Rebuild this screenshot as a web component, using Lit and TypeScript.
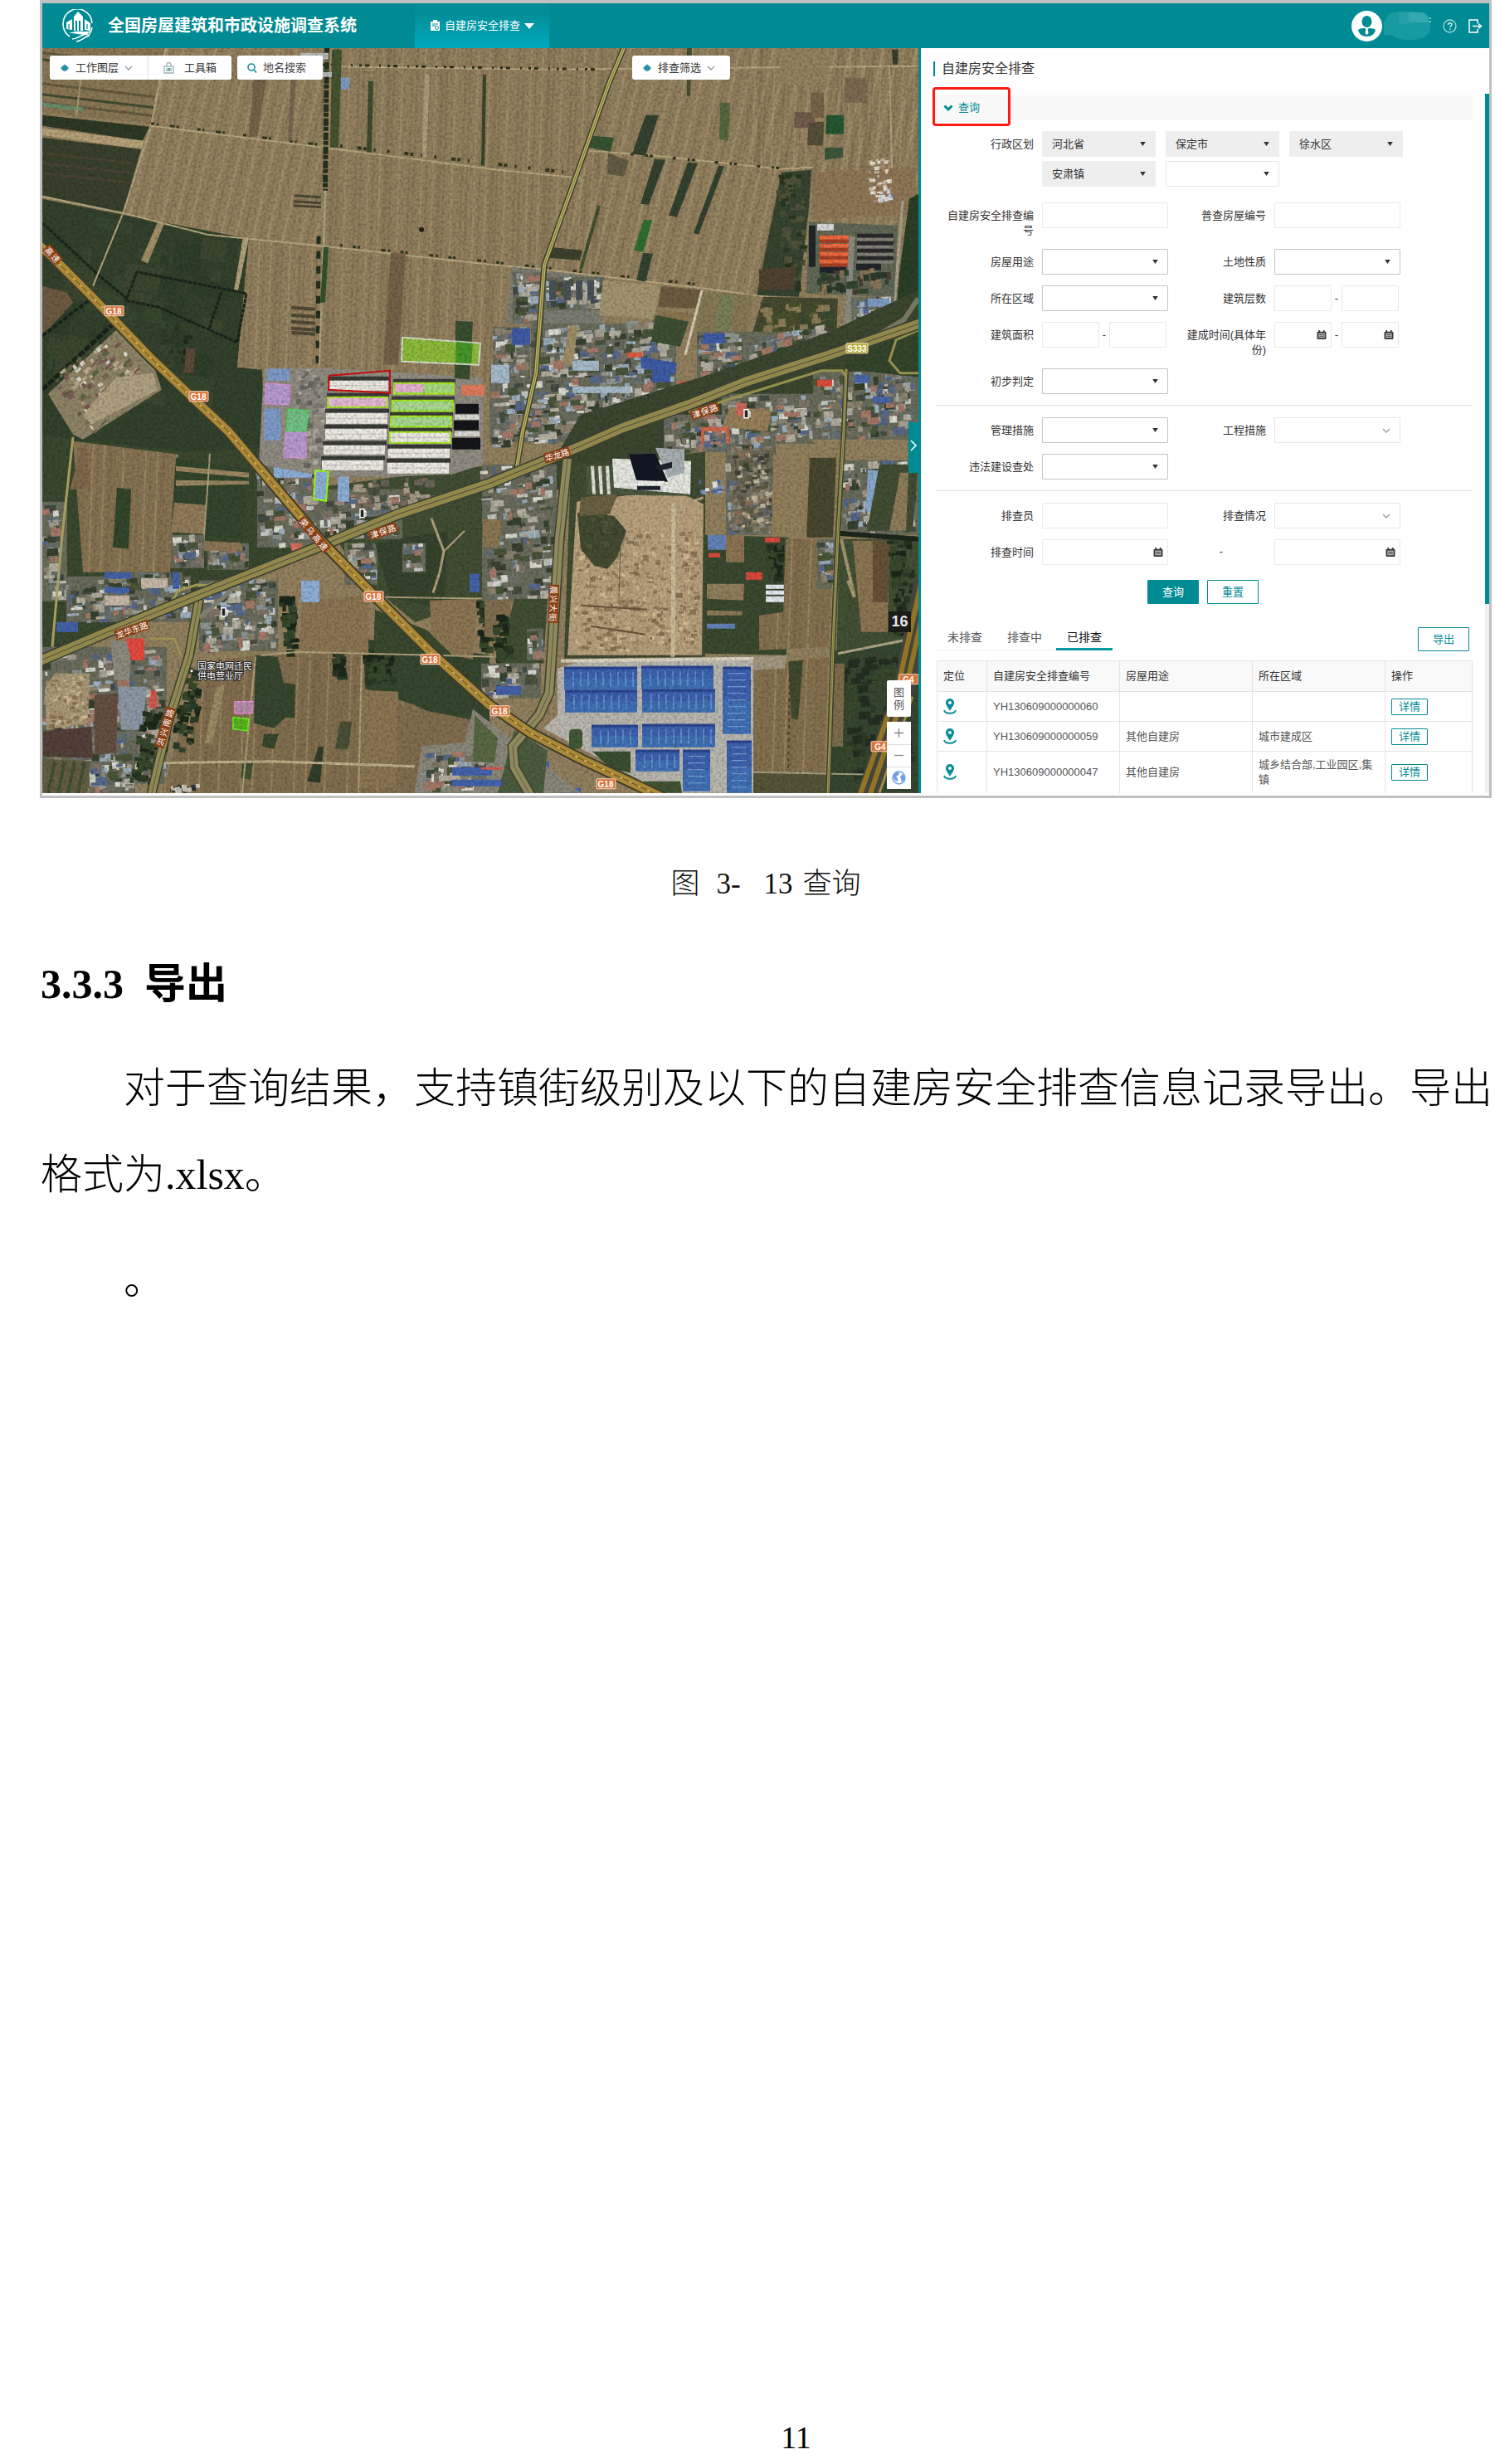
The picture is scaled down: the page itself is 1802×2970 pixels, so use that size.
import { LitElement, html, svg, css, nothing } from "lit";
import { customElement, property } from "lit/decorators.js";

/* ---------- helpers for the aerial map ---------- */

function rng(seed: number) {
  let s = seed >>> 0;
  return () => {
    s = (s * 1664525 + 1013904223) >>> 0;
    return s / 4294967296;
  };
}

const ROOFS = ["#c6c8c2", "#8f9694", "#70756f", "#454c42", "#dcdbd2", "#66716f", "#9fb0bf", "#a8a294", "#39422f", "#7d7466", "#57698c", "#8c8571", "#4a5539", "#b5b0a2", "#a67a68"];
const TREES = ["#25331f", "#2c3b27", "#1c281a", "#37492c"];
const DIRT = ["#c6b08a", "#a9926e", "#97815f", "#d0ba95", "#8b7555"];

/** Scatters small blocks over a slightly rotated zone, one path per colour. */
function scatter(x: number, y: number, w: number, h: number, n: number, seed: number, colors: string[], minS: number, maxS: number, rot = -4) {
  const r = rng(seed);
  const paths: string[] = colors.map(() => "");
  for (let i = 0; i < n; i++) {
    const c = Math.floor(r() * colors.length);
    const bw = minS + r() * (maxS - minS);
    const bh = minS + r() * (maxS - minS) * 0.6;
    const bx = x + r() * (w - bw);
    const by = y + r() * (h - bh);
    paths[c] += `M${bx.toFixed(0)} ${by.toFixed(0)}h${bw.toFixed(0)}v${bh.toFixed(0)}h-${bw.toFixed(0)}z`;
  }
  return svg`<g transform="rotate(${rot} ${x + w / 2} ${y + h / 2})">${paths.map((d, i) => svg`<path d=${d} fill=${colors[i]}></path>`)}</g>`;
}

const town = (x: number, y: number, w: number, h: number, n: number, seed: number, rot = -4) =>
  svg`<rect x=${x} y=${y} width=${w} height=${h} fill="#6a6c5c"></rect>${scatter(x, y, w, h, n, seed, ROOFS, 3, 15, rot)}`;

const poly = (p: string, fill: string, o = 1) => svg`<polygon points=${p} fill=${fill} opacity=${o}></polygon>`;
const line = (p: string, stroke: string, w: number, dash = "none") =>
  svg`<polyline points=${p} fill="none" stroke=${stroke} stroke-width=${w} stroke-dasharray=${dash}></polyline>`;

const road = (p: string, edge: string, fill: string, w: number) =>
  svg`${line(p, "#3a4030", w + 3)}${line(p, fill, w)}${line(p, edge, 1)}`;

const shield = (x: number, y: number, t: string, c = "#d9713a") =>
  svg`<rect x=${x - 11} y=${y - 6} width=${t.length > 3 ? 26 : 23} height="12" rx="1" fill=${c} stroke="#f3dcc4" stroke-width="1"></rect>
  <text x=${x + (t.length > 3 ? 2 : 0)} y=${y + 4} text-anchor="middle" class="shield">${t}</text>`;

const roadName = (x: number, y: number, a: number, t: string, gap = 11) =>
  svg`<g transform="translate(${x} ${y}) rotate(${a})">
    <rect x="-1" y="-6" width=${t.length * gap + 2} height="12" fill="#8a3f14"></rect>
    ${[...t].map((c, i) => svg`<text x=${i * gap + gap / 2} y="4" text-anchor="middle" class="road">${c}</text>`)}
  </g>`;

const fuel = (x: number, y: number) =>
  svg`<path d="M${x} ${y}h5v10h-5z M${x + 5} ${y + 2}l2 1v6" fill="#222" stroke="#fff" stroke-width="1.4"></path>`;

/** Large blue roof with light ribs. */
function hall(x: number, y: number, w: number, h: number, vertical = false) {
  let d = "";
  if (vertical) for (let v = y + 8; v < y + h - 3; v += 8) d += `M${x + 6} ${v}h${w - 12}`;
  else for (let v = x + 11; v < x + w - 4; v += 9) d += `M${v} ${y + 6}v${h - 10}`;
  return svg`<rect x=${x} y=${y} width=${w} height=${h} fill="#4070b6"></rect>
    <rect x=${x} y=${y} width=${w} height=${h / 2} fill="#3c5cac" opacity=".7"></rect>
    <rect x=${x} y=${y} width=${w} height="3" fill="#2b4590"></rect>
    <path d=${d} stroke="#84abdf" stroke-width="1" fill="none"></path>`;
}

const shed = (x: number, y: number, w: number, h: number, fill = "#efece6", stroke = "none") =>
  svg`<rect x=${x - 1} y=${y - 5} width=${w + 3} height="5" fill="#3a3c38"></rect>
    <rect x=${x} y=${y} width=${w} height=${h} fill=${fill} stroke=${stroke} stroke-width="2"></rect>
    <path d="M${x + 2} ${y + h / 2}h${w - 4}" stroke="#c6c2ba" stroke-width="1"></path>`;

@customElement("aerial-map")
export class AerialMap extends LitElement {
  static styles = css`
    :host { display: block; overflow: hidden; }
    svg { display: block; width: 100%; height: 100%; }
    text { font-family: "Liberation Sans", "Noto Sans CJK SC", sans-serif; }
    .shield { font-size: 10px; font-weight: 700; fill: #fff; }
    .road { font-size: 10px; fill: #fff; }
    .place { font-size: 11px; fill: #fff; stroke: #222; stroke-width: 2px; paint-order: stroke; }
  `;

  render() {
    const highway = "45,294 60,307 110,357 137,385 180,430 240,487 275,520 320,573 385,650 450,717 520,787 590,850 640,884 700,915 800,962";
    const jinbao = "45,798 130,762 240,717 390,657 480,620 590,583 700,538 750,516 830,488 900,460 1000,428 1115,388";
    return html`<svg viewBox="51 58 1056 898" preserveAspectRatio="xMidYMid slice" role="img" aria-label="卫星地图">
      <defs>
        <pattern id="rows" width="64" height="400" patternUnits="userSpaceOnUse" patternTransform="rotate(2)">
          <path d="M3 0V400M17 0V400M40 0V400" stroke="#ad9a74" stroke-width="2" opacity=".5"></path>
          <path d="M9 0V400M30 0V400M52 0V400M58 0V400" stroke="#75644a" stroke-width="2" opacity=".35"></path>
          <path d="M24 0V400" stroke="#66543c" stroke-width="5" opacity=".2"></path>
        </pattern>
        <pattern id="tilt" width="56" height="400" patternUnits="userSpaceOnUse" patternTransform="rotate(13)">
          <path d="M5 0V400M26 0V400M43 0V400" stroke="#b09d77" stroke-width="3" opacity=".45"></path>
          <path d="M14 0V400M34 0V400M50 0V400" stroke="#75644a" stroke-width="2" opacity=".35"></path>
        </pattern>
        <filter id="grain" x="0" y="0" width="100%" height="100%">
          <feTurbulence type="fractalNoise" baseFrequency=".3" numOctaves="3" seed="4"></feTurbulence>
          <feColorMatrix values="0 0 0 0 0  0 0 0 0 0  0 0 0 0 0  1.6 0 0 0 -.6"></feColorMatrix>
        </filter>
      </defs>

      <rect x="40" y="50" width="1080" height="920" fill="#93815f"></rect>
      <rect x="388" y="50" width="340" height="410" fill="url(#rows)"></rect>
      <polygon points="190,58 392,58 386,445 285,445 300,288 150,258" fill="url(#tilt)"></polygon>
      <polygon points="755,58 1107,58 1107,260 940,330 910,356 660,325" fill="url(#tilt)"></polygon>
      <rect x="900" y="50" width="210" height="160" fill="url(#rows)"></rect>

      ${/* north-west strips */ nothing}
      ${poly("51,58 200,58 182,150 51,135", "#8a7856")}
      ${[64, 72, 101, 114, 124].map((y, i) => line(`51,${y} 186,${y + 16}`, i % 2 ? "#444c34" : "#655a3e", 3))}
      ${line("51,126 100,132", "#6a8c6c", 5)} ${line("98,90 92,140", "#a9986f", 2)}
      ${poly("51,139 180,153 172,170 51,152", "#2e3a25")}
      ${poly("51,155 174,170 170,180 51,163", "#b6a27a")}
      ${poly("51,166 170,180 148,258 51,236", "#39412d")}
      ${[185, 197, 209].map((y) => line(`51,${y} 160,${y + 12}`, "#4b4430", 3))}

      ${/* dark green fields west of the tree line */ nothing}
      ${poly("51,240 148,259 300,288 286,443 316,446 320,560 51,620", "#33422c")}
      ${scatter(60, 265, 220, 260, 50, 11, ["#37482f", "#2f3f2a", "#3c4730"], 10, 46, 12)}
      ${poly("190,268 198,270 178,318 170,314", "#a28f69")}
      ${poly("293,286 300,287 287,350 282,350", "#b3a07a")}
      ${poly("300,288 388,299 383,440 286,443", "#93815f")} <polygon points="302,289 388,299 383,440 287,443" fill="url(#rows)"></polygon>
      ${poly("51,345 80,352 88,365 51,405", "#6e5b43")}
      ${line("51,269 120,333 153,360 165,328 297,354 286,413 250,397 190,370 150,362", "#1a251a", 3, "5 1")}
      ${line("267,352 252,396", "#1a251a", 3, "5 1")} ${line("51,405 110,360", "#1a251a", 4, "6 2")}
      ${line("51,470 135,392", "#18221a", 5, "8 2")}
      ${poly("58,475 140,398 185,440 195,470 100,530 88,524", "#8f8467")}
      ${scatter(75, 418, 95, 85, 110, 21, ["#b8aa8c", "#7c6a58", "#dad6c8", "#7c5a55", "#5d6548"], 2, 9, -40)}
      ${poly("140,455 185,450 190,470 110,512 100,500", "#b1a283")}
      ${scatter(195, 390, 40, 55, 30, 22, TREES, 3, 9)}
      ${poly("224,420 236,420 233,450 222,450", "#5d4a37")}

      ${/* roads and tree rows between the northern fields */ nothing}
      ${line("200,58 182,152 148,258 112,345", "#b7a780", 2)}
      ${line("182,152 390,178", "#b9a981", 2)} ${line("390,178 600,205 700,215", "#b9a981", 2)}
      ${line("182,149 388,175", "#35361f", 3, "4 3 2 14 6 2 3 22")}
      ${line("410,176 700,210", "#35361f", 4, "3 18 5 2 4 9 2 14")}
      ${line("51,237 148,257 250,283 390,297 600,320 655,325 850,348 940,360", "#b9a981", 2)}
      ${line("410,296 850,344", "#35361f", 3, "3 12 4 2 3 26 5 3")}
      ${line("365,80 660,84 1107,80", "#b9a981", 2)} ${line("365,78 720,84", "#30321f", 3, "3 4 5 12 2 8")}
      ${line("710,182 790,188 940,204 980,202", "#b9a981", 2)} ${line("760,186 940,203", "#30321f", 3, "4 14 3 2 4 24")}
      ${line("394,58 392,230", "#25301e", 6, "9 1 5 2")} ${line("384,285 383,440", "#25301e", 5, "9 9")}
      ${line("392,230 385,440", "#b0aa8c", 2)}
      ${poly("400,60 412,60 408,178 398,178", "#465432")} ${poly("444,98 450,98 448,184 442,184", "#3f4b2f")}
      ${poly("390,298 396,298 392,365 386,365", "#355230")} ${poly("582,90 586,90 584,200 580,200", "#37472b")}
      ${poly("512,90 518,90 514,190 509,190", "#b39a7d")} ${poly("306,90 322,90 310,165 300,165", "#776349")}
      ${poly("351,90 357,90 352,170 347,170", "#776853")} ${poly("471,305 489,306 480,440 462,440", "#776249")}
      ${[236, 243, 248].map((y) => line(`354,${y} 387,${y + 2}`, "#4a4a36", 3))}
      ${[371, 380, 388, 396, 401].map((y) => line(`351,${y} 380,${y + 2}`, "#524b38", 4))}
      <circle cx="508" cy="277" r="3" fill="#26201a"></circle>
      <path d="M362 64h34v8h-34zM362 87h38v6h-38z" fill="#b9bbb8"></path><path d="M411 94h10v14h-10z" fill="#7c9cc8"></path>

      ${/* north-east parcels */ nothing}
      ${poly("778,139 794,139 778,188 762,186", "#354230")}
      ${poly("789,192 802,193 782,247 772,246", "#354230")} ${poly("829,196 841,197 816,262 806,260", "#354230")}
      ${poly("866,200 873,201 842,283 836,281", "#354230")} ${poly("776,265 786,266 775,304 764,302", "#2f6f30")}
      ${poly("775,305 787,306 778,340 767,338", "#344430")} ${poly("663,298 702,302 699,314 660,311", "#3f422e")}
      ${poly("720,248 724,249 702,325 698,325", "#40522f")} ${poly("713,164 740,166 736,183 710,178", "#375433")}
      ${poly("733,185 758,194 752,213 732,210", "#635d46")} ${poly("868,124 880,124 878,170 867,168", "#55683f")}
      ${poly("996,139 1017,139 1017,162 995,162", "#255831")} ${poly("958,135 982,136 982,155 957,154", "#735d4c")}
      ${poly("975,148 993,147 992,176 973,175", "#56503b")} ${poly("994,178 1016,178 1016,190 994,193", "#3e583c")}
      ${poly("977,112 993,112 993,142 977,142", "#7b644b")} ${poly("1018,94 1044,94 1044,124 1018,124", "#7d6b52")}
      ${poly("940,60 1000,58 998,104 940,102", "#94835f")} ${poly("828,58 834,58 832,116 828,116", "#465133")}
      ${poly("1075,60 1083,60 1082,78 1076,78", "#37402c")} ${line("1072,80 1076,235", "#b0a17b", 2)}
      ${poly("942,208 978,205 975,250 963,358 912,356", "#374530")}
      ${scatter(938, 208, 36, 145, 70, 33, ["#465137", "#28361f", "#53543c"], 3, 12)}
      ${poly("915,325 958,322 955,350 915,350", "#524331")} ${poly("980,208 1104,202 1104,258 978,265", "#8f7857")}
      ${scatter(1046, 192, 30, 54, 60, 34, ["#cbbda2", "#a98d76", "#8c7661", "#e5dfd0"], 2, 7)}
      ${scatter(1055, 228, 22, 16, 14, 35, ["#6e86b8", "#3f4a68", "#ddd"], 3, 7)}
      ${poly("1096,240 1107,234 1107,360 1080,378 1084,330", "#2b4026")} ${line("1088,242 1078,370", "#aaa48f", 3)}

      ${/* factory with red and grey roofs */ nothing}
      ${poly("975,268 1082,272 1078,358 972,354", "#626956")}
      ${[284, 294, 304, 313].map((y) => svg`<path d="M988 ${y}h35v5h-35z" fill="#f0683c"></path><path d="M988 ${y + 5}h35v4h-35z" fill="#a83f24"></path>`)}
      ${[282, 291, 300, 309].map((y) => svg`<path d="M1033 ${y}h44v5h-44z" fill="#2b2b2d"></path><path d="M1033 ${y + 5}h44v4h-44z" fill="#85807a"></path>`)}
      <path d="M975 272h8v50h-8zM988 322h32v8h-32zM1032 318h30v8h-30z" fill="#22262a"></path>
      <path d="M985 270h20v8h-20z" fill="#dcdcdc"></path>${line("1027,285 1020,420", "#8f8d83", 7)}
      ${scatter(985, 325, 90, 30, 40, 36, ["#4a3f34", "#34472f", "#8b7658", "#2d3a2b"], 4, 14)}
      ${poly("920,358 1010,360 1008,405 905,408", "#474a31")}
      ${scatter(915, 360, 92, 45, 50, 37, ["#5a5a38", "#3c4a32", "#8c7d58", "#49512e"], 5, 18)}
      ${poly("1025,358 1078,358 1075,390 1028,402", "#6d7562")} ${scatter(1028, 358, 48, 40, 30, 38, ROOFS, 3, 12)}
      <path d="M1046 360h26v10h-26z" fill="#7f9cc4"></path>

      ${/* settlements around the crossing */ nothing}
      ${poly("617,322 728,335 725,395 610,390", "#7e7f73")} ${town(618, 328, 38, 62, 44, 41)}
      ${town(656, 334, 72, 40, 60, 42)}
      ${[662, 680, 694, 708].map((x) => svg`<path d="M${x} 338h8v24h-8z" fill="#4b5357"></path>`)}
      ${poly("727,338 797,344 788,385 722,380", "#a5946f")} ${poly("797,345 846,350 838,372 793,370", "#6f5b41")}
      ${poly("793,374 834,378 830,392 790,386", "#8a7751")} ${poly("848,352 908,356 900,402 838,400", "#877a56")}
      ${poly("868,355 886,357 878,400 860,398", "#7a815a")} ${line("846,350 826,428", "#dccfb4", 3)}
      ${town(594, 394, 45, 80, 70, 43)} ${town(640, 390, 175, 80, 250, 44)} ${town(590, 455, 225, 78, 320, 45)}
      ${town(840, 400, 60, 55, 60, 46)} ${town(900, 400, 100, 40, 110, 47, -12)}
      ${poly("790,380 830,388 820,418 785,412", "#3e5033")} ${poly("686,392 697,393 690,440 678,438", "#a08e68")}
      <path d="M617 396h22v20h-22zM772 430l44 8-3 14-40-8zM786 445h22v16h-22zM848 402h26v12h-26zM880 440h6v22h-6z" fill="#3f5ca6"></path>
      <path d="M818 460h24v8h-24zM756 425h18v6h-18zM758 488h6v12h-6zM644 425h4v14h-4z" fill="#dd5b44"></path>
      <path d="M690 435h32v12h-32zM592 440h22v22h-22zM690 466h70v8h-70z" fill="#a7bccb"></path>
      ${poly("700,500 860,450 1000,400 1107,350 1107,470 960,510 780,560 640,600", "#3c4730")}
      ${town(980, 448, 127, 82, 170, 48)} ${town(870, 475, 110, 60, 120, 49)} ${town(800, 500, 80, 45, 70, 50)}
      ${poly("1015,440 1107,395 1107,455 1020,445", "#34462c")}
      ${poly("880,490 930,495 925,520 870,515", "#98805a")} <path d="M888 486h12v18l-12-4z" fill="#d6675c"></path>
      <path d="M845 515h34v20h-4v-15h-26v15h-4z" fill="#d2694f"></path><path d="M985 458h18v8h-18z" fill="#dc4c3d"></path>
      <path d="M1052 478h22v8h-22zM1030 452h18v10h-18z" fill="#4a68a8"></path>

      ${/* south-east */ nothing}
      ${town(875, 535, 60, 110, 120, 51)} ${poly("885,540 935,540 930,640 880,640", "#6f6650", 0.6)}
      ${scatter(885, 545, 48, 90, 90, 52, ["#9c8d72", "#5d5648", "#c3b9a0", "#3f4335"], 2, 8)}
      ${poly("932,548 976,550 972,645 930,645", "#93805c")} ${poly("976,552 1008,552 1004,648 972,648", "#48492f")}
      ${town(1012, 555, 95, 90, 110, 53)} <path d="M1046 567h12v50h-14z" fill="#8aa9cf"></path>
      ${poly("1060,560 1107,560 1100,640 1045,640", "#424f33")} ${poly("1085,570 1095,570 1092,640 1072,640", "#8f7d5c")}
      ${poly("850,645 950,648 948,790 850,788", "#3b4a30")}
      ${poly("875,645 897,645 897,678 875,678", "#8b7553")} ${poly("852,704 897,704 896,724 852,722", "#917e5c")}
      ${poly("852,736 895,737 895,742 852,742", "#8d7a58")} ${poly("947,650 1006,650 1002,780 915,784 915,742 944,738", "#86724f")}
      <polygon points="947,650 1006,650 1002,780 915,784 915,742 944,738" fill="url(#rows)"></polygon>
      ${town(985, 650, 22, 60, 30, 54)}
      <path d="M899 690h20v9h-20zM922 648h18v6h-18zM854 667h14v5h-14z" fill="#dd4b3e"></path>
      <path d="M923 705h22v5h-22zM923 712h22v5h-22zM923 719h22v7h-22z" fill="#e6eaf2"></path>
      <path d="M853 645h22v18h-22zM852 752h34v6h-34z" fill="#6484b8"></path>
      ${scatter(922, 655, 24, 46, 30, 55, TREES, 4, 12)}
      ${poly("1012,650 1107,650 1107,800 1008,800", "#435135")} ${poly("1028,652 1072,652 1070,762 1038,762", "#8c7653")}
      ${poly("1052,652 1072,652 1070,726 1052,726", "#665239")} ${scatter(1072, 650, 33, 120, 70, 56, TREES, 4, 14)}
      ${line("1014,650 1030,720 1022,700", "#a79871", 4)} ${line("1010,643 1107,650", "#1d271c", 6)}
      ${poly("908,800 1002,792 996,956 906,950", "#86724f")}
      <polygon points="908,800 1002,792 996,956 906,950" fill="url(#rows)"></polygon>
      ${poly("950,798 968,796 962,868 954,866", "#424a30")} ${line("952,810 950,930", "#4a4330", 2, "4 4")}
      ${poly("908,792 948,790 946,806 908,808", "#a49a83")}
      ${poly("1005,785 1107,775 1107,956 1000,956", "#364730")} ${scatter(1016, 790, 85, 150, 160, 57, ["#2d3b28", "#3a4a2d", "#243022"], 4, 14)}
      ${poly("1006,800 1018,800 1016,900 1002,900", "#7e6e4c")}
      ${poly("908,932 1000,932 1000,956 908,956", "#56553a")} ${line("908,931 1060,934", "#a8a084", 2)}
      ${line("1010,788 1090,772", "#b3a98b", 3)}

      ${/* construction ground and civic complex */ nothing}
      ${poly("688,560 850,545 850,792 680,794", "#414c33")}
      ${poly("695,605 812,590 848,608 846,790 684,790", "#b8a17c")}
      ${scatter(692, 640, 152, 146, 420, 61, DIRT, 2, 8, 0)}
      ${poly("696,618 740,622 755,640 744,672 732,686 716,682 700,662", "#454c33")}
      ${scatter(698, 620, 46, 54, 40, 63, ["#3b4430", "#525639", "#454c33"], 3, 12, 0)}
      ${poly("700,600 745,595 735,620 698,622", "#6b6243")}
      ${line("700,730 780,735", "#6a573c", 2)} ${line("712,755 778,765", "#6a573c", 2)} ${line("748,660 746,720", "#6a573c", 1)}
      ${line("812,606 811,792", "#cdbf9e", 5)} ${line("848,600 812,612", "#b3a583", 3)}
      ${poly("707,562 833,558 832,598 707,596", "#4c593f")} ${poly("738,553 833,556 832,596 740,588", "#e8e8e2")}
      ${[714, 723, 732].map((x) => line(`${x},562 ${x + 2},596`, "#e2e2da", 4))}
      <path d="M790 540l35 2v28l-20 6z" fill="#a9b0b4"></path><path d="M758 548l32-1 15 34-38-2z" fill="#121722"></path>
      <path d="M790 562l20-5v7l-16 4zM768 585h28v6h-28z" fill="#1f2530"></path><path d="M765 580h36l-3 6h-30z" fill="#f2f2ee"></path>
      ${scatter(842, 575, 30, 28, 14, 62, ["#8098c0", "#e1e4ea", "#52699a"], 3, 10)}

      ${/* blue halls */ nothing}
      ${poly("672,806 698,798 908,796 908,956 800,956 655,878 672,862", "#bab8b0")}
      ${line("676,797 908,794", "#ddd6c4", 4)}
      ${hall(680, 804, 88, 28)} ${hall(681, 832, 87, 27)} ${hall(773, 803, 87, 28)} ${hall(774, 831, 88, 28)}
      ${hall(871, 804, 34, 81, true)} ${hall(713, 874, 56, 27)} ${hall(774, 873, 88, 28)}
      ${poly("714,906 760,906 760,932 735,926", "#3b5032")} ${hall(766, 904, 53, 26)} ${hall(823, 904, 33, 50, true)}
      ${hall(876, 893, 30, 63, true)} ${poly("775,942 820,942 822,956 792,956", "#435434")}
      <rect x="686" y="879" width="16" height="24" rx="5" fill="#445938"></rect>

      ${/* fields and villages in the south-west */ nothing}
      ${poly("51,525 225,545 320,540 420,640 240,715 51,790", "#3b4930")}
      ${poly("88,532 215,548 205,690 100,690", "#897554")} <polygon points="88,532 215,548 205,690 100,690" fill="url(#rows)"></polygon>
      ${poly("141,588 158,590 155,662 136,660", "#34462c")} ${poly("98,540 105,542 108,590 84,590", "#81694d")}
      ${poly("212,552 300,566 292,650 206,643", "#34462d")}
      ${poly("212,562 300,570 300,576 212,568", "#9b8762")} ${poly("212,579 300,580 300,584 212,586", "#9b8762")}
      ${poly("210,606 248,609 246,644 206,642", "#917c5b")} ${line("253,547 245,660", "#a79f7b", 2)}
      ${town(206, 645, 40, 40, 30, 71)} ${town(250, 655, 50, 32, 36, 72)}
      ${poly("246,652 292,655 292,664 246,664", "#8d7857")}
      ${town(51, 605, 30, 120, 46, 73)} ${town(80, 695, 150, 55, 130, 74)} ${town(130, 690, 90, 30, 40, 75)}
      <path d="M126 690h32v8h-32zM126 708h30v7h-30zM68 750h26v12h-26zM208 690h8v20h-8z" fill="#4463a8"></path>
      <path d="M170 697h32v12h-32zM126 718h30v12h-30z" fill="#c8b9a8"></path>
      ${town(240, 700, 95, 85, 150, 76)} ${town(51, 780, 150, 165, 230, 77)}
      ${poly("66,812 108,812 106,872 56,880 54,830", "#ab9a77")} ${scatter(56, 815, 52, 64, 110, 78, DIRT, 2, 7)}
      ${poly("52,882 110,876 112,914 52,912", "#54413a")} ${poly("114,838 142,836 140,908 114,910", "#655042")}
      ${poly("133,772 158,775 156,820 138,820", "#8e8c80")} ${poly("142,828 178,828 170,880 146,880", "#8d99a5")}
      <path d="M152 770h22v26h-16z" fill="#e64b40"></path><path d="M182 832h6v22h-8z" fill="#d9584c"></path>
      ${poly("51,915 115,918 105,956 51,956", "#655f45")} ${[58, 70, 82, 94].map((x) => line(`${x + 8},918 ${x},956`, "#445033", 4))}
      ${town(108, 918, 55, 38, 50, 79)} ${scatter(162, 850, 40, 106, 70, 80, TREES, 4, 12, 12)}

      ${poly("308,790 560,785 555,956 195,956 240,800", "#847050")}
      <polygon points="308,790 560,785 555,956 195,956 240,800" fill="url(#rows)"></polygon>
      ${scatter(212, 805, 30, 105, 60, 81, TREES, 4, 11, 10)}
      ${poly("308,790 335,792 350,860 330,878 306,872", "#37472f")} ${poly("335,822 356,825 355,866 336,864", "#37472f")}
      ${poly("260,830 271,826 256,896 247,896", "#9d8b65")} ${poly("318,885 336,885 330,903 316,900", "#38482e")}
      ${poly("410,870 424,870 420,903 404,903", "#4b5134")}
      ${poly("384,900 390,900 386,944 370,942", "#323e2b")} ${poly("292,920 305,920 302,940 290,938", "#425232")}
      ${poly("438,770 590,790 590,870 560,880 500,850 440,830", "#37472f")}
      ${poly("436,832 480,834 478,950 434,950", "#8c7653")} ${poly("478,850 570,868 560,895 510,905 508,955 478,955", "#826e50")}
      ${scatter(400, 785, 18, 35, 40, 82, TREES, 4, 10)} ${scatter(438, 780, 42, 48, 70, 83, TREES, 5, 12)}
      ${line("190,920 330,918 500,924", "#c1b28c", 3)} ${line("308,792 292,956", "#b0a27d", 2)} ${line("436,790 432,956", "#b0a27d", 2)}
      ${scatter(200, 945, 48, 11, 18, 84, ["#30342e", "#cfcabf"], 3, 9)}

      ${poly("362,590 600,560 600,720 500,750 440,700", "#424f34")}
      ${town(310, 560, 75, 100, 90, 85)} ${town(385, 590, 100, 60, 90, 86)} ${town(415, 655, 40, 50, 40, 87)}
      ${poly("452,655 540,640 535,735 470,720", "#36442d")} ${town(485, 655, 28, 35, 20, 88)}
      ${line("520,625 535,665 530,690 522,715", "#b3a37f", 3)} ${line("535,665 560,640", "#b3a37f", 2)}
      ${poly("365,722 445,718 444,790 360,785", "#8c7653")} ${poly("518,724 575,722 570,795 545,790 520,765", "#8c7653")}
      ${poly("452,735 515,760 545,790 450,790", "#3b4a30")} ${scatter(575, 722, 20, 70, 40, 89, TREES, 4, 12)}
      ${scatter(338, 715, 22, 78, 50, 90, TREES, 4, 12)} ${line("315,790 360,786 440,788 600,792", "#b0a27d", 2)}
      ${line("465,720 600,722", "#aca07c", 2)} ${town(581, 560, 90, 165, 180, 91)}
      ${poly("582,626 604,626 602,660 582,660", "#8c7653")} ${poly("584,724 616,722 610,770 584,768", "#826e50")}
      ${poly("620,722 660,722 655,800 600,800", "#424f34")} ${scatter(594, 740, 24, 60, 40, 92, TREES, 5, 12)}
      ${town(635, 758, 20, 38, 14, 93)} ${town(580, 800, 72, 42, 50, 94)}
      <path d="M598 827h30v11h-30zM648 918h14v26h-14zM674 950h26v6h-26zM566 692h12v22h-12z" fill="#4463aa"></path>
      <path d="M363 700h22v26h-22zM330 563h46v13h-46zM407 572h14v33h-14z" fill="#8fafd8"></path>
      <path d="M350 655h14v12h-12z" fill="#d9705e"></path>
      ${poly("570,855 700,956 500,956 508,900 560,895", "#8b897b")} ${scatter(508, 905, 80, 50, 60, 95, ROOFS, 4, 15, 0)}
      ${poly("572,862 600,890 596,920 570,918", "#5a6944")} ${poly("620,880 660,905 655,956 600,956", "#4d5d40")}
      <path d="M545 925h48v10h-48zM545 940h60v8h-60z" fill="#4463ae"></path><path d="M580 925h26v3h-26z" fill="#d95b50"></path>

      ${/* industrial block */ nothing}
      ${poly("318,444 390,444 470,448 582,456 582,560 545,572 470,575 395,575 312,560", "#918d83")}
      ${scatter(355, 445, 40, 130, 90, 96, ["#9b968a", "#7f7b72", "#b0aba0", "#6b6a62"], 3, 9)}
      ${scatter(425, 575, 100, 40, 50, 97, ["#7d6b60", "#6b6558", "#4b553f", "#a99c8a"], 4, 12)}
      <path d="M322 445h27v14h-27zM318 493h20v38h-20z" fill="#7f9ccb"></path>
      ${shed(396, 459, 72, 12)} ${shed(395, 479, 72, 12, "#eab9db", "#a9ea1e")} ${shed(393, 498, 74, 13)}
      ${shed(392, 517, 74, 13)} ${shed(390, 537, 74, 11)} ${shed(388, 555, 74, 12)}
      ${shed(475, 462, 72, 13, "#a5dd78", "#a9ea1e")} <path d="M476 463h34v10h-34z" fill="#e7b2d3"></path>
      ${shed(473, 483, 73, 13, "#a5dd8a", "#a9ea1e")} ${shed(471, 502, 73, 13, "#a5dd8a", "#a9ea1e")}
      ${shed(470, 521, 73, 13, "#efece6", "#a9ea1e")} ${shed(468, 541, 74, 11)} ${shed(467, 558, 74, 13)}
      <path d="M397 453l73-6v27l-74-4z" fill="none" stroke="#d40c0c" stroke-width="2"></path>
      <path d="M556 464h28v13h-28z" fill="#e07c60"></path>
      <path d="M549 487h28v12h-28zM547 507h30v12h-30zM545 528h34v14h-34z" fill="#15161a"></path>
      <path d="M548 500h30v6h-30zM548 520h30v6h-30z" fill="#dedcd6"></path>
      <path d="M320 462l29 2v24l-30-1zM344 520h25v32h-27z" fill="#b79bd2" stroke="#ea8fe0" stroke-width="1"></path>
      <path d="M347 493l26 2-4 25h-24z" fill="#73c288" stroke="#48d84c" stroke-width="1"></path>
      <path d="M380 567l16 2-3 35-15-2z" fill="#8eb1d8" stroke="#9dff10" stroke-width="2"></path>
      <path d="M549 387l21 1-4 70-18-2z" fill="#3b4f31"></path>
      <path d="M485 407l94 7-2 26-93-4z" fill="#8ccb33" fill-opacity=".8" stroke="#d6dccb" stroke-width="2"></path>
      <path d="M550 412l20 2-2 24-19-1z" fill="#2f8a24" opacity=".7"></path>
      <path d="M283 846h22l-1 14h-21z" fill="#b48ba8" stroke="#ee90dc" stroke-width="1.5"></path>
      <path d="M281 865l19 2-2 14-17-2z" fill="#58b41e" stroke="#6cf31e" stroke-width="1.5"></path>

      <rect x="51" y="58" width="1056" height="898" filter="url(#grain)" opacity=".28"></rect>

      ${/* roads */ nothing}
      ${road("752,58 735,98 656,320 646,450 630,520 622,570", "#7a7238", "#bdb060", 4)}
      ${line("88,527 75,645 63,780", "#a79d5c", 3)}
      ${road("1020,445 1017,520 1010,640 1004,780 998,960", "#7a7238", "#a59d55", 3)}
      ${line("830,497 900,475 990,447 1015,447 1020,455", "#96904f", 3)}
      ${line("1107,360 1090,385 1040,415 960,445", "#77765e", 6)}
      ${line("1107,398 1080,410 1072,435 1085,450 1107,450", "#96904f", 3)}
      ${road("240,722 228,790 203,870 182,960", "#5b5850", "#8f8850", 9)}
      ${line("205,730 215,712 238,705 250,706 325,681", "#a09850", 3)}
      ${line("180,770 210,770 218,790", "#a09850", 2)} ${line("240,745 270,720 300,690", "#7f7d6c", 5)}
      ${road("684,553 674,650 667,760 662,835 650,862 618,900 620,925 640,960", "#5b5a5e", "#8f8858", 10)}
      ${road(jinbao, "#4f4a35", "#91874c", 11)}
      ${line("1115,700 1090,830 1045,960", "#44453a", 26)}
      ${line("1111,700 1082,830 1036,960", "#937425", 6)} ${line("1121,700 1092,830 1048,960", "#937425", 6)} ${line("1100,840 1060,956", "#a08a4c", 3)}
      ${line(highway, "#3d3d2a", 14)} ${line(highway, "#ab8838", 10)} ${line(highway, "#5e4a1c", 1)}
      ${line(highway, "#cfae5a", 2, "3 9")}

      ${roadName(56, 299, 48, "高速")} ${roadName(363, 626, 50, "荣乌高速", 12)}
      ${roadName(446, 646, -19, "津保路")} ${roadName(834, 501, -19, "津保路")} ${roadName(657, 553, -17, "华龙路", 10)}
      ${roadName(140, 766, -19, "龙华东路", 10)} ${roadName(192, 900, -73, "洪兴南路", 12)} ${roadName(668, 706, 92, "晨兴大街", 11)}
      ${shield(137, 375, "G18")} ${shield(239, 478, "G18")} ${shield(450, 719, "G18")} ${shield(518, 795, "G18")}
      ${shield(602, 857, "G18")} ${shield(730, 945, "G18")} ${shield(1095, 819, "G4")} ${shield(1061, 900, "G4")}
      ${shield(1031, 420, "S333", "#b7ab3c")}
      ${fuel(434, 614)} ${fuel(267, 733)} ${fuel(897, 494)}
      <circle cx="231" cy="809" r="1.5" fill="#fff"></circle>
      <text class="place" x="238" y="807">国家电网迁民</text><text class="place" x="238" y="819">供电营业厅</text>
    </svg>`;
  }
}

/* ---------- small icons ---------- */

const caret = html`<svg class="ico caret" viewBox="0 0 8 6" width="7" height="5" aria-hidden="true"><path d="M0 0h8L4 6z" fill="currentColor"></path></svg>`;
const chevron = html`<svg class="ico" viewBox="0 0 10 6" width="10" height="6" aria-hidden="true"><path d="M1 1l4 4 4-4" fill="none" stroke="#999" stroke-width="1.3"></path></svg>`;
const calendar = html`<svg class="ico cal" viewBox="0 0 12 12" width="12" height="11" aria-hidden="true"><path d="M1 2h1V0h2v2h4V0h2v2h1l1 1v8l-1 1H1l-1-1V3z" fill="#3a3a3a"></path><path d="M2 4h8v6H2z" fill="#bbb"></path><path d="M3 6h6M3 8h6" stroke="#444" stroke-width="1"></path></svg>`;
const layers = html`<svg class="ico" viewBox="0 0 12 10" width="12" height="10" aria-hidden="true"><path d="M6 0l6 5-6 5-6-5z" fill="#9fd0d8"></path><path d="M6 1l4 3-1 4H3L2 4z" fill="#2b8ea0"></path></svg>`;
const pin = html`<svg viewBox="0 0 16 19" width="16" height="19" aria-hidden="true"><path fill-rule="evenodd" d="M8 0a5 5 0 0 1 5 5c0 3.5-3.5 6.5-5 10C6.5 11.500 3 8.500 3 5a5 5 0 0 1 5-5zm0 3a2 2 0 1 0 0 4 2 2 0 0 0 0-4z" fill="#088b94"></path><path d="M1 14c1 5 13 5 14 0" fill="none" stroke="#088b94" stroke-width="1.8"></path></svg>`;

type Kind = "select" | "text" | "multi" | "date";

@customElement("app-root")
export class AppRoot extends LitElement {
  @property({ attribute: false }) rows = [
    ["YH130609000000060", "", ""],
    ["YH130609000000059", "其他自建房", "城市建成区"],
    ["YH130609000000047", "其他自建房", "城乡结合部,工业园区,集镇"],
  ];

  static styles = css`
    :host {
      --teal: #008b94;
      display: flex;
      flex-direction: column;
      box-sizing: border-box;
      min-height: 100vh;
      background: #fff;
      color: #333;
      font: 13px/18px "Liberation Sans", "Noto Sans CJK SC", sans-serif;
    }
    *, *::before { box-sizing: border-box; }
    button, input, select { font: inherit; color: inherit; margin: 0; outline: 0; }
    button { cursor: pointer; }
    .frame { margin: 0 4px 0 48px; border: 3px solid #c0c0c0; border-top-width: 4px; padding-bottom: 3px; }
    header { display: flex; align-items: center; height: 54px; padding: 0 8px 0 24px; background: var(--teal); color: #fff; }
    .brand { margin: 0 70px 0 17px; font-size: 20px; line-height: 28px; font-weight: 700; white-space: nowrap; }
    .module { display: flex; align-items: center; justify-content: center; gap: 5px; width: 162px; height: 54px; padding: 0; border: 0; background: linear-gradient(#028d97 20%, #00a9bc); color: #fff; }
    .spacer { flex: 1; }
    .user { display: flex; align-items: center; }
    .mask { width: 57px; height: 36px; margin: 0 14px 0 2px; }
    .plain { display: flex; padding: 0; border: 0; background: none; color: #fff; }
    .exit { margin-left: 14px; }

    .work { display: grid; grid-template-columns: minmax(0, 1056fr) minmax(0, 688fr); }
    .mapwrap { position: relative; overflow: hidden; }
    aerial-map { position: absolute; inset: 0; }
    .tools { position: absolute; top: 9px; left: 9px; display: flex; gap: 7px; }
    .filter { position: absolute; top: 9px; left: 711px; }
    .card { display: flex; align-items: center; height: 29px; border-radius: 3px; background: #fff; }
    .card button, .card label { display: flex; align-items: center; gap: 7px; height: 29px; padding: 0 18px; border: 0; background: none; white-space: nowrap; }
    .card button:first-child { padding: 0 18px 0 12px; }
    .card button + button { border-left: 1px solid #ddd; gap: 12px; }
    .card label { padding: 0 12px; gap: 7px; }
    .card input { width: 60px; padding: 0; border: 0; background: none; }
    .card input::placeholder { color: #444; opacity: 1; }
    .zoomlevel { position: absolute; right: 9px; bottom: 194px; width: 27px; height: 25px; background: #1b1b19; color: #e8e8e8; font-size: 18px; line-height: 25px; font-weight: 700; text-align: center; }
    .side { position: absolute; right: 9px; bottom: 5px; width: 29px; }
    .side button { display: flex; align-items: center; justify-content: center; width: 29px; height: 27px; padding: 0; border: 0; background: #fff; color: #888; }
    .side .legend { height: 44px; margin-bottom: 6px; border-radius: 2px; color: #555; line-height: 15px; padding: 0 8px; white-space: normal; }
    .side button + button + button { border-top: 1px solid #ddd; }
    .fold { position: absolute; right: 0; top: 451px; width: 12px; height: 61px; padding: 0; border: 0; background: var(--teal); }

    .panel { display: flex; border-left: 3px solid var(--teal); min-width: 0; }
    .content { flex: 1; min-width: 0; padding: 16px 15px 0; }
    .rail { width: 5px; margin-top: 55px; background: #f0f0f0; }
    .thumb { height: 73%; background: var(--teal); }
    h1 { margin: 0 0 23px; padding-left: 8px; border-left: 2px solid var(--teal); font-size: 16px; line-height: 18px; font-weight: 400; }
    .querybar { position: relative; height: 30px; background: #f8f8f8; }
    .querybar button { display: flex; align-items: center; gap: 6px; height: 30px; padding: 0 12px; border: 0; background: none; color: var(--teal); }
    .mark { position: absolute; left: -1px; top: -10px; width: 94px; height: 47px; border: 3px solid #ff1a14; border-radius: 4px; pointer-events: none; }

    .region { display: flex; gap: 10px; padding: 13px 0 19px 13px; }
    .region .lab { width: 108px; flex: none; }
    .picks { display: flex; flex-wrap: wrap; gap: 5px 12px; width: 436px; }
    .picks .box { width: 137px; }
    .grid { display: grid; grid-template-columns: 108px 152px 108px 152px; gap: 13px 10px; padding-left: 13px; align-items: start; }
    .grid + .grid { margin: 13px 0 0 3px; padding: 14px 0 0 10px; border-top: 1px solid #ddd; }
    .lab { padding-top: 7px; text-align: right; }
    .box { position: relative; display: block; height: 31px; }
    .box select, .box input { display: block; width: 100%; height: 31px; padding: 0 11px; border: 1px solid #e9e9e9; border-radius: 1px; background: #fff; appearance: none; }
    .box.select select { border-color: #c4c4c4; }
    .box.multi select { border-color: #e6e6e6; }
    .box.fixed select { background: #eee; border-color: #eee; opacity: 1; color: #333; }
    .box.blank select { border-color: #e6e6e6; }
    .box .ico { position: absolute; right: 12px; top: 13px; pointer-events: none; }
    .box .cal { right: 6px; top: 10px; }
    .pair { display: grid; grid-template-columns: 69px 12px 69px; align-items: center; text-align: center; }
    .dash { padding-top: 6px; text-align: center; }
    .pair .dash { padding: 0; }
    .actions { display: flex; gap: 10px; justify-content: center; margin: 18px 0 28px 0; }
    .btn { height: 29px; width: 62px; padding: 0; border: 1px solid var(--teal); border-radius: 1px; background: #fff; color: var(--teal); }
    .primary { background: var(--teal); color: #fff; }
    .bar { display: flex; align-items: flex-start; justify-content: space-between; padding: 0 4px; }
    .tabs { display: flex; gap: 4px; }
    .tabs button { width: 68px; height: 28px; padding: 0 0 4px; border: 0; border-bottom: 1px solid #eee; background: none; color: #555; font-size: 14px; }
    .tabs .on { border-bottom: 3px solid #009aa3; padding-bottom: 2px; color: #111; }
    table { width: calc(100% - 4px); margin: 11px 0 0 4px; border-collapse: collapse; table-layout: fixed; }
    th, td { height: 36px; padding: 0 7px; border: 1px solid #e4e4e4; text-align: left; font-weight: 400; }
    th { height: 37px; background: #f9f9f9; }
    td { color: #555; }
    tbody tr:last-child td { height: 50px; border-bottom: 0; }
    .c1 { width: 60px; } .c2, .c3, .c4 { width: 160px; }
    td .plain { color: var(--teal); }
    .detail { display: block; width: 44px; height: 20px; line-height: 16px; }

    .cap { display: flex; justify-content: center; margin: 81px 4px 0 48px; color: #111; font: 35px/46px "Liberation Serif", "Noto Sans CJK SC", serif; font-weight: 300; }
    .cap span { margin-right: 20px; }
    .cap .dashed { margin-right: 28px; }
    .cap .near { margin-right: 12px; }
    .doc { padding-left: 49px; color: #000; font-family: "Liberation Serif", "Noto Sans CJK SC", serif; }
    h2 { display: flex; gap: 25px; margin: 67px 0 44px; font-size: 50px; line-height: 60px; font-weight: 700; }
    .doc p { margin: 0 0 23px; font-size: 50px; line-height: 104px; text-indent: 100px; font-weight: 300; }
    footer { margin-top: auto; padding: 0 0 10px 117px; text-align: center; color: #000; font: 38px/44px "Liberation Serif", serif; }
  `;

  private box(id: string, kind: Kind, extra = "", value = "") {
    const control =
      kind === "select" || kind === "multi"
        ? html`<select id=${id} ?disabled=${extra === "fixed"}><option>${value}</option></select>`
        : html`<input id=${id} type="text">`;
    const icon = kind === "select" ? caret : kind === "multi" ? chevron : kind === "date" ? calendar : nothing;
    return html`<span class="box ${kind} ${extra}">${control}${icon}</span>`;
  }

  private field(id: string, label: string, kind: Kind) {
    return html`<label class="lab" for=${id}>${label}</label>${this.box(id, kind)}`;
  }

  private pair(id: string, label: string, kind: Kind) {
    return html`<label class="lab" for=${id}>${label}</label>
      <div class="pair">${this.box(id, kind)}<label class="dash" for=${id + "-to"}>-</label>${this.box(id + "-to", kind)}</div>`;
  }

  render() {
    return html`
      <section class="frame">
        <header>
          <svg width="38" height="40" viewBox="0 0 38 40" aria-hidden="true">
            <path d="M9 33A17.5 18 0 1 1 36 17M36 22a17 17 0 0 1-6 11" fill="none" stroke="#fff" stroke-width="1.6"></path>
            <path d="M14 26V9l5-6 6 6v17h-3V14h-2v12h-2V14h-2v12zM5 24v-8l7-4v13zM27 12l7 5v9l-7-1zM8 29c12-5 20 0 27-3-9 9-15 2-27 3z" fill="#fff"></path>
            <path d="M12 36c8 0 10-6 19-6M17 39c8-1 9-6 16-7" fill="none" stroke="#fff" stroke-width="1.6"></path>
            <path d="M8 18v6M30 18v6" stroke="#008b94" stroke-width="1.2"></path>
          </svg>
          <div class="brand">全国房屋建筑和市政设施调查系统</div>
          <button class="module">
            <svg width="13" height="14" viewBox="0 0 13 14" aria-hidden="true"><path d="M1 2h3V0h5v2h3v11H1z" fill="#fff"></path><path d="M3 5h7M3 7h4" stroke="#078f99"></path><circle cx="8.5" cy="9.5" r="2" fill="#fff" stroke="#078f99"></circle></svg>
            自建房安全排查
            <svg width="12" height="7" viewBox="0 0 12 7" aria-hidden="true"><path d="M0 0h12L6 7z" fill="#fff"></path></svg>
          </button>
          <span class="spacer"></span>
          <div class="user">
            <svg width="37" height="37" viewBox="0 0 37 37" role="img" aria-label="用户"><circle cx="18.5" cy="18.5" r="18.5" fill="#fff"></circle><ellipse cx="18.5" cy="13" rx="6" ry="7" fill="#008b94"></ellipse><path d="M8 23c3-2 6-2 8-2l2.5 2 2.5-2c2 0 5 0 8 2-1 5-5 8-10.5 8S9 28 8 23z" fill="#008b94"></path><path d="M17.500 22h2l1 5-2 2-2-2z" fill="#fff"></path></svg>
            <svg class="mask" viewBox="0 0 57 36" aria-hidden="true"><path d="M6 4C12 0 40-1 48 4c8 5 9 14 7 20-2 7-10 11-22 11C20 36 12 32 10 29H0V14z" fill="#179aa2"></path><path d="M18 2h12v14H18z" fill="#26a0a8"></path><path d="M30 2h18l5 4v8H30z" fill="#35a7ae"></path><path d="M54 9h3M54 13h3" stroke="#cfe"></path></svg>
          </div>
          <button class="plain" aria-label="帮助"><svg width="17" height="17" viewBox="0 0 17 17"><circle cx="8.5" cy="8.5" r="7.5" fill="none" stroke="#a6d8db" stroke-width="1.3"></circle><path d="M6.500 7c0-3 4.500-3 4.500-.500 0 1.500-2.200 1.500-2.200 3.500M8.800 11.500v1.500" fill="none" stroke="#d8f0f1" stroke-width="1.4"></path></svg></button>
          <button class="plain exit" aria-label="退出"><svg width="17" height="17" viewBox="0 0 17 17"><path d="M11 5V1H1v15h10v-4M5 8.500h10M12 5.500l3.500 3-3.500 3" fill="none" stroke="#fff" stroke-width="1.5"></path></svg></button>
        </header>

        <div class="work">
          <div class="mapwrap">
            <aerial-map></aerial-map>
            <div class="tools">
              <div class="card">
                <button>${layers} 工作图层 ${chevron}</button>
                <button><svg width="13" height="14" viewBox="0 0 13 14" aria-hidden="true"><path d="M1 5h11v8H1zM4 5V3a2.5 2.5 0 0 1 5 0v2M3 8h7M3 10h7" fill="none" stroke="#9bb5b5" stroke-width="1.3"></path><path d="M6 7h2v3H6z" fill="#4e9f8c"></path></svg>工具箱</button>
              </div>
              <div class="card">
                <label><svg width="12" height="12" viewBox="0 0 12 12" aria-hidden="true"><circle cx="5" cy="5" r="4" fill="none" stroke="#12919a" stroke-width="1.6"></circle><path d="M8 8l3 3.5" stroke="#12919a" stroke-width="1.6"></path></svg><input type="text" placeholder="地名搜索" aria-label="地名搜索"></label>
              </div>
            </div>
            <div class="card filter"><button>${layers} 排查筛选 ${chevron}</button></div>
            <div class="zoomlevel">16</div>
            <div class="side">
              <button class="legend">图例</button>
              <button aria-label="放大"><svg width="11" height="11" viewBox="0 0 11 11"><path d="M0 5.5h11M5.5 0v11" stroke="#888" stroke-width="1.3"></path></svg></button>
              <button aria-label="缩小"><svg width="11" height="11" viewBox="0 0 11 11"><path d="M0 5.5h11" stroke="#888" stroke-width="1.3"></path></svg></button>
              <button aria-label="全图"><svg width="17" height="17" viewBox="0 0 17 17"><circle cx="8.5" cy="8.5" r="7.5" fill="#fff" stroke="#6f9fe0" stroke-width="1.4"></circle><path d="M2 5l4-3.500 3 1L8 5 5 7l2 2v4l-3-1-2.500-4zM10 7l3-3 2.500 3-.500 4-3 3-1-4z" fill="#6f9fe0"></path></svg></button>
            </div>
            <button class="fold" aria-label="收起面板"><svg width="9" height="14" viewBox="0 0 9 14"><path d="M1 1l6 6-6 6" fill="none" stroke="#fff" stroke-width="1.5"></path></svg></button>
          </div>

          <div class="panel">
            <div class="content">
              <h1>自建房安全排查</h1>
              <div class="querybar">
                <button><svg width="12" height="9" viewBox="0 0 12 9" aria-hidden="true"><path d="M1.5 1.5L6 6l4.5-4.5" fill="none" stroke="#008b94" stroke-width="3"></path></svg>查询</button>
                <span class="mark"></span>
              </div>
              <div class="region">
                <label class="lab" for="province">行政区划</label>
                <div class="picks">
                  ${this.box("province", "select", "fixed", "河北省")}
                  ${this.box("city", "select", "fixed", "保定市")}
                  ${this.box("county", "select", "fixed", "徐水区")}
                  ${this.box("townlevel", "select", "fixed", "安肃镇")}
                  ${this.box("village", "select", "blank")}
                </div>
              </div>
              <div class="grid">
                ${this.field("code", "自建房安全排查编号", "text")} ${this.field("census", "普查房屋编号", "text")}
                ${this.field("usage", "房屋用途", "select")} ${this.field("land", "土地性质", "select")}
                ${this.field("area", "所在区域", "select")} ${this.pair("floors", "建筑层数", "text")}
                ${this.pair("size", "建筑面积", "text")} ${this.pair("built", "建成时间(具体年份)", "date")}
                ${this.field("judge", "初步判定", "select")}
              </div>
              <div class="grid">
                ${this.field("manage", "管理措施", "select")} ${this.field("works", "工程措施", "multi")}
                ${this.field("illegal", "违法建设查处", "select")}
              </div>
              <div class="grid">
                ${this.field("inspector", "排查员", "text")} ${this.field("status", "排查情况", "multi")}
                ${this.field("from", "排查时间", "date")}<label class="dash" for="to">-</label>${this.box("to", "date")}
              </div>
              <div class="actions"><button class="btn primary">查询</button><button class="btn">重置</button></div>
              <div class="bar">
                <div class="tabs" role="tablist">
                  <button role="tab">未排查</button><button role="tab">排查中</button><button role="tab" class="on" aria-selected="true">已排查</button>
                </div>
                <button class="btn">导出</button>
              </div>
              <table>
                <colgroup><col class="c1"><col class="c2"><col class="c3"><col class="c4"><col></colgroup>
                <thead><tr><th>定位</th><th>自建房安全排查编号</th><th>房屋用途</th><th>所在区域</th><th>操作</th></tr></thead>
                <tbody>
                  ${this.rows.map((r) => html`<tr>
                    <td><button class="plain" aria-label="定位">${pin}</button></td>
                    <td>${r[0]}</td><td>${r[1]}</td><td>${r[2]}</td>
                    <td><button class="btn detail">详情</button></td>
                  </tr>`)}
                </tbody>
              </table>
            </div>
            <div class="rail"><div class="thumb"></div></div>
          </div>
        </div>
      </section>

      <div class="cap"><span>图</span> <span class="dashed">3-</span> <span class="near">13</span> 查询</div>
      <article class="doc">
        <h2><span>3.3.3</span> <span>导出</span></h2>
        <p>对于查询结果，支持镇街级别及以下的自建房安全排查信息记录导出。导出格式为.xlsx。</p>
        <p>。</p>
      </article>
      <footer>11</footer>
    `;
  }
}
